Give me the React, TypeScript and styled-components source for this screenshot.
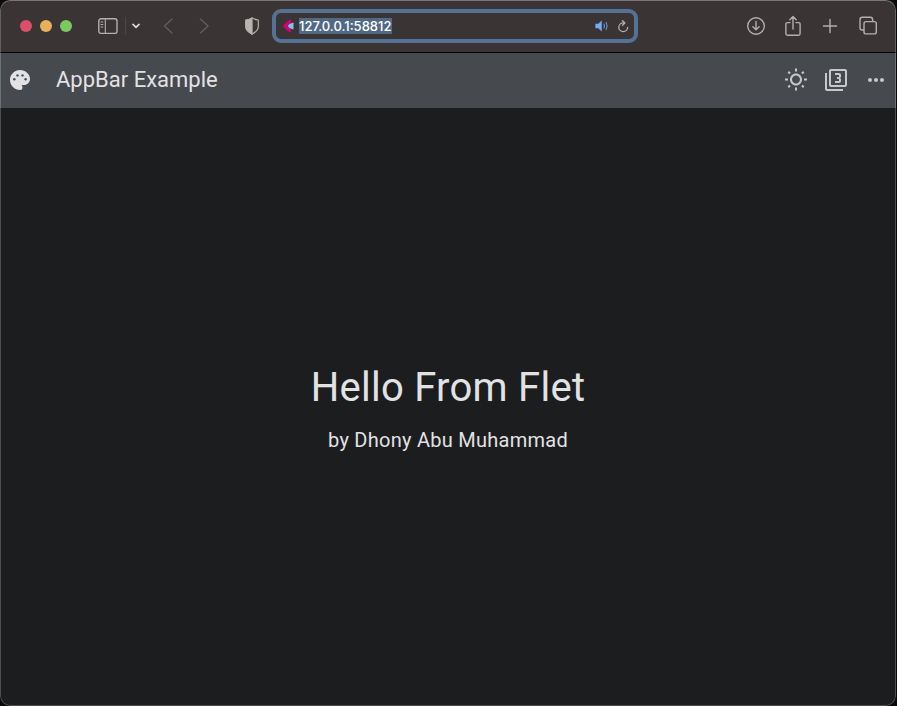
import React from "react";
import styled, { createGlobalStyle } from "styled-components";
import { MdOutlineWbSunny, MdFilter3, MdMoreHoriz } from "react-icons/md";

const GlobalStyle = createGlobalStyle`
  * { box-sizing: border-box; }
  body { margin: 0; background: #080808; overflow: hidden; }
`;

const Window = styled.div`
  position: relative;
  width: 896px;
  height: 706px;
  display: flex;
  flex-direction: column;
  overflow: hidden;
  border-radius: 10px;
  background: #1c1d1f;
  font-family: Roboto, sans-serif;
  &::after {
    content: "";
    position: absolute;
    inset: 0;
    border: 1px solid rgba(255, 255, 255, 0.22);
    border-top-color: rgba(255, 255, 255, 0.32);
    border-radius: 10px;
    pointer-events: none;
  }
`;

const Toolbar = styled.header`
  height: 53px;
  flex: none;
  display: flex;
  align-items: center;
  padding: 0 17px 0 20px;
  background: #3a3534;
  border-bottom: 1px solid #000;
`;

const TrafficLights = styled.div`
  display: flex;
  gap: 8px;
`;

const Light = styled.span<{ $color: string }>`
  width: 12px;
  height: 12px;
  border-radius: 50%;
  background: ${(p) => p.$color};
`;

const Glyph = styled.svg<{ $left?: number; $color?: string }>`
  flex: none;
  display: block;
  margin-left: ${(p) => p.$left ?? 0}px;
  fill: none;
  stroke: ${(p) => p.$color ?? "#b3afad"};
  stroke-width: 1.4;
  stroke-linecap: round;
  stroke-linejoin: round;
`;

const Divider = styled.span`
  width: 1px;
  height: 18px;
  margin-left: 7px;
  background: #4c4746;
`;

const AddressBar = styled.div`
  width: 366px;
  height: 34px;
  margin-left: 12px;
  padding: 0 4px 0 6px;
  display: flex;
  align-items: center;
  border: 4px solid #557295;
  border-radius: 9px;
  background: #3a3534;
`;

const Address = styled.span`
  height: 16px;
  width: 93px;
  margin-left: 4px;
  margin-right: auto;
  background: #526985;
  color: #fff;
  font: 500 13px/17px Inter, sans-serif;
  white-space: nowrap;
`;

const Actions = styled.div`
  display: flex;
  align-items: center;
  margin-left: auto;
`;

const AppBar = styled.div`
  height: 55px;
  flex: none;
  display: flex;
  align-items: center;
  padding: 0 8px 2px;
  background: #46494d;
  color: #e2e2e5;
`;

const AppTitle = styled.h1`
  margin: 0 auto 0 24px;
  font-size: 22px;
  font-weight: 400;
  line-height: 28px;
`;

const AppActions = styled.div`
  display: flex;
  gap: 16px;
  color: #c5c8cc;
`;

const Content = styled.main`
  flex: 1;
  display: flex;
  flex-direction: column;
  align-items: center;
  justify-content: center;
  gap: 12px;
  padding-top: 1px;
  color: #e2e2e5;
`;

const Greeting = styled.h2`
  margin: 0;
  font-size: 40px;
  font-weight: 400;
  line-height: 52px;
  letter-spacing: 0.26px;
`;

const Author = styled.p`
  margin: 0;
  font-size: 20px;
  font-weight: 450;
  line-height: 28px;
  letter-spacing: 0.26px;
`;

const PaletteIcon = () => (
  <svg width="24" height="24" viewBox="0 0 24 24" fill="currentColor">
    <path d="M12 2C6.490 2 2 6.490 2 12s4.490 10 10 10a2.500 2.500 0 0 0 2.500-2.500c0-.61-.23-1.200-.64-1.670a.528.528 0 0 1-.13-.33c0-.28.22-.5.5-.5H16c3.310 0 6-2.690 6-6C22 6.040 17.510 2 12 2z" />
    <g fill="#46494d">
      <circle cx="6.300" cy="11.300" r="1.200" />
      <circle cx="9.500" cy="7.400" r="1.200" />
      <circle cx="14.500" cy="7.400" r="1.200" />
      <circle cx="17.600" cy="11.300" r="1.200" />
    </g>
  </svg>
);

export default function App() {
  return (
    <>
      <GlobalStyle />
      <Window>
        <Toolbar>
          <TrafficLights>
            <Light $color="#d95067" />
            <Light $color="#e5b15d" />
            <Light $color="#7aca60" />
          </TrafficLights>
          <Glyph $left={26} width="20" height="16" viewBox="0 0 20 16">
            <rect x=".8" y=".8" width="18.2" height="14.6" rx="2.2" />
            <path d="M7.3 1v14M3 4h1.8M3 6.5h1.8M3 9h1.8" strokeWidth="1.1" />
          </Glyph>
          <Divider />
          <Glyph $left={6} width="8" height="6" viewBox="0 0 8 6" $color="#dedbd9">
            <path d="M1 1.4 4 4.4 7 1.4" strokeWidth="1.6" />
          </Glyph>
          <Glyph $left={22} width="11" height="16" viewBox="0 0 11 16" $color="#625d5b">
            <path d="M10 1 2.500 8l7.500 7" />
          </Glyph>
          <Glyph $left={26} width="11" height="16" viewBox="0 0 11 16" $color="#625d5b">
            <path d="M1.500 1 9 8l-7.500 7" />
          </Glyph>
          <Glyph $left={34} width="16" height="18" viewBox="0 0 16 18">
            <path d="M8 .9C6.500 2.200 3.900 2.700 1.700 3v6.500c0 3.500 3 5.900 6.300 7.600 3.300-1.700 6.300-4.100 6.300-7.600V3C12.100 2.700 9.500 2.200 8 .9Z" strokeWidth="1.2" />
            <path d="M8 .9C6.500 2.200 3.900 2.700 1.700 3v6.500c0 3.500 3 5.900 6.300 7.600Z" fill="#b8b4b2" strokeWidth=".8" />
          </Glyph>
          <AddressBar>
            <Glyph width="13" height="14" viewBox="0 0 13 14" $color="none">
              <path d="M9 .3Q6 1.200.8 7q5.200 5.800 8.200 6.700V10L6.200 7 9 4Z" fill="#d50072" />
              <path d="M11.500 3.500C8 4.500 6.500 5.500 6 7c.5 1.500 2 2.500 5.500 3.500Z" fill="#7fc5ea" />
            </Glyph>
            <Address>127.0.0.1:58812</Address>
            <Glyph width="14" height="12" viewBox="0 0 14 12" $color="#6c9fe3">
              <path d="M.8 4h2.500l3.200-3v10l-3.200-3H.8Z" fill="#78acf3" strokeWidth=".6" />
              <path d="M9 4q1.200 2 0 4M11.200 2.400q2.200 3.600 0 7.200" strokeWidth="1" />
            </Glyph>
            <Glyph $left={8} width="13" height="14" viewBox="0 0 13 14">
              <path d="M6.200 3.900A4.400 4.400 0 1 0 10.600 8.300M5.300 1.600l2.600 2.400-2.400 2.300" strokeWidth="1.300" />
            </Glyph>
          </AddressBar>
          <Actions>
            <Glyph width="20" height="20" viewBox="0 0 20 20">
              <circle cx="10" cy="10" r="8.300" />
              <path d="M10 5.500v8M6.900 10.700l3.100 3 3.100-3" />
            </Glyph>
            <Glyph $left={18} width="18" height="22" viewBox="0 0 18 22">
              <path d="M6 7.600H3.500c-1 0-1.600.6-1.600 1.600v9.400c0 1 .6 1.600 1.600 1.600h11c1 0 1.600-.6 1.600-1.600V9.200c0-1-.6-1.600-1.600-1.600H12M9 14V1.600M5.800 4.700 9 1.500l3.200 3.200" />
            </Glyph>
            <Glyph $left={20} width="16" height="16" viewBox="0 0 16 16">
              <path d="M8 1.500v13M1.500 8h13" />
            </Glyph>
            <Glyph $left={20} width="21" height="20" viewBox="0 0 21 20">
              <rect x="6" y="5.600" width="12.300" height="12.300" rx="2" />
              <path d="M5.800 14H4.200c-1.400 0-2.200-.8-2.200-2.200V3.500c0-1.400.8-2.200 2.200-2.200h8.200c1.400 0 2.200.8 2.200 2.200v1.900" />
            </Glyph>
          </Actions>
        </Toolbar>
        <AppBar>
          <PaletteIcon />
          <AppTitle>AppBar Example</AppTitle>
          <AppActions>
            <MdOutlineWbSunny size={24} />
            <MdFilter3 size={24} />
            <MdMoreHoriz size={24} />
          </AppActions>
        </AppBar>
        <Content>
          <Greeting>Hello From Flet</Greeting>
          <Author>by Dhony Abu Muhammad</Author>
        </Content>
      </Window>
    </>
  );
}
